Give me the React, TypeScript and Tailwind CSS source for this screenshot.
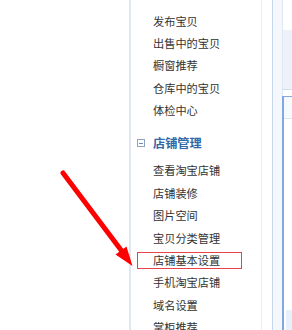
import React from "react";

const groupA = ["发布宝贝", "出售中的宝贝", "橱窗推荐", "仓库中的宝贝", "体检中心"];
const groupB = ["查看淘宝店铺", "店铺装修", "图片空间", "宝贝分类管理", "店铺基本设置", "手机淘宝店铺", "域名设置", "掌柜推荐"];

function Item({ label, active }: { label: string; active?: boolean }) {
  if (active) {
    return (
      <li className="h-[22.4px] flex items-center">
        <span className="h-[17px] w-[105px] border border-[#e8434a] pl-[15px] flex items-center">{label}</span>
      </li>
    );
  }
  return <li className="h-[22.4px] flex items-center pl-[16px]">{label}</li>;
}

export default function App() {
  return (
    <div
      className="relative w-[292px] h-[330px] overflow-hidden bg-white flex"
      style={{ fontFamily: '"Noto Sans CJK SC", "Noto Sans", sans-serif' }}
    >
      <div className="w-[129px] shrink-0 bg-white" />
      <div className="w-[2px] shrink-0 bg-[#e1e8f1]" />
      <div className="w-[130px] shrink-0 bg-white pl-[6px] pt-[10px] text-[11.2px] text-[#333] leading-none">
        <ul>
          {groupA.map((t) => (
            <Item key={t} label={t} />
          ))}
        </ul>
        <div className="mt-[10px] h-[22.4px] flex items-center">
          <span className="w-[8px] h-[8px] border border-[#8ca4c0] flex items-center justify-center ml-[0px]">
            <span className="w-[4px] h-[1px] bg-[#6f89a8]" />
          </span>
          <span className="ml-[8px] text-[12.2px] font-bold text-[#2f69a8]">店铺管理</span>
        </div>
        <ul className="mt-[5.5px]">
          {groupB.map((t) => (
            <Item key={t} label={t} active={t === "店铺基本设置"} />
          ))}
        </ul>
      </div>
      <div className="w-[1px] shrink-0 bg-[#eeeeee]" />
      <div className="w-[10px] shrink-0 bg-white" />
      <div className="w-[1px] shrink-0 bg-[#c5d6ee]" />
      <div className="w-[9px] shrink-0 bg-[#f4f7fb]" />
      <div className="flex-1 flex flex-col">
        <div className="h-[30px] bg-white border-l border-[#dfe7f2]" />
        <div className="h-[59px] bg-[#edf2fa] border-l border-[#dfe7f2]" />
        <div className="h-[1px] bg-[#d3deec]" />
        <div className="h-[6px] bg-white border-l border-[#dfe7f2]" />
        <div className="flex-1 border-l-2 border-t border-[#7fa9e3] bg-white flex flex-col">
          <div className="h-[22px] bg-[#f7f9fc] border-b border-[#e0e6ee]" />
          <div className="flex-1" />
          <div className="h-[20px] ml-[2px] bg-[#e8f0fb]" />
        </div>
      </div>

      <svg className="absolute left-0 top-0 pointer-events-none" width="292" height="330" viewBox="0 0 292 330">
        <line x1="63" y1="173" x2="124" y2="254" stroke="#ff0000" strokeWidth="5" strokeLinecap="round" />
        <polygon points="132.5,266 126.5,246.5 115.5,254.5" fill="#ff0000" />
      </svg>
    </div>
  );
}
